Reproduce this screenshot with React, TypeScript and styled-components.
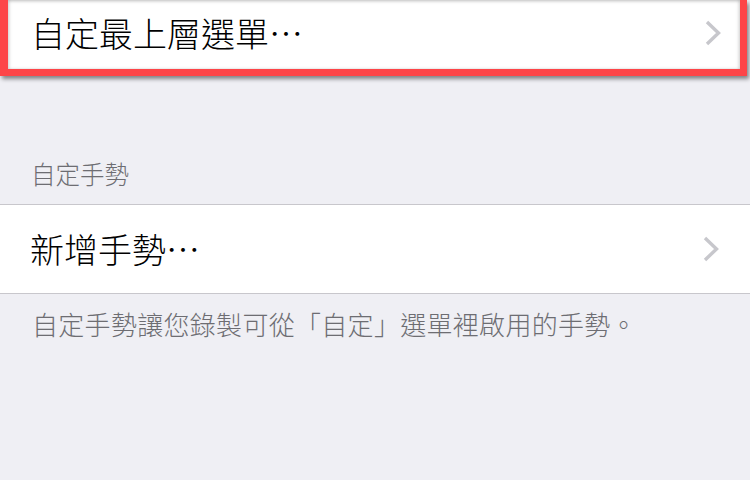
import React from "react";
import styled, { createGlobalStyle } from "styled-components";

const Global = createGlobalStyle`
  html, body {
    margin: 0;
    padding: 0;
    background: #efeff4;
  }
  body {
    font-family: "Noto Sans CJK TC", "Noto Sans", sans-serif;
    overflow: hidden;
  }
`;

const Page = styled.div`
  width: 750px;
  height: 480px;
  background: #efeff4;
  display: flex;
  flex-direction: column;
`;

const HighlightRow = styled.div`
  box-sizing: border-box;
  width: 747px;
  height: 76px;
  background: #fff;
  border: 7px solid #fd4548;
  border-left-width: 8px;
  border-top: 0;
  box-shadow: 2px 3px 4px rgba(0, 0, 0, 0.45), inset 0 2px 3px rgba(0, 0, 0, 0.12),
    inset 2px 0 3px rgba(0, 0, 0, 0.1), inset -2px 0 3px rgba(0, 0, 0, 0.1);
  display: flex;
  align-items: center;
  justify-content: space-between;
  padding: 0 19px 3px 23px;
`;

const Group = styled.div`
  background: #fff;
  border-top: 1px solid #c8c7cc;
  border-bottom: 1px solid #c8c7cc;
`;

const Row = styled.div`
  box-sizing: border-box;
  height: 88px;
  display: flex;
  align-items: center;
  justify-content: space-between;
  padding: 0 31px 0 30px;
`;

const Label = styled.span`
  font-size: 34px;
  font-weight: 300;
  color: #000;
  line-height: 40px;
`;

const SectionHeader = styled.div`
  box-sizing: border-box;
  height: 128px;
  display: flex;
  align-items: flex-end;
  padding: 0 0 15px 31px;
  font-size: 24.5px;
  font-weight: 300;
  line-height: 30px;
  color: #6d6d72;
`;

const Footer = styled.div`
  padding: 14px 0 0 32px;
  font-size: 26px;
  font-weight: 300;
  line-height: 32px;
  color: #6d6d72;
  letter-spacing: 0.3px;
`;

const ChevronSvg = styled.svg`
  width: 16px;
  height: 26px;
  flex: none;
  display: block;
`;

const Chevron = () => (
  <ChevronSvg viewBox="0 0 16 26">
    <polyline
      points="2,2 13.5,13 2,24"
      fill="none"
      stroke="#c7c7cc"
      strokeWidth="3.4"
    />
  </ChevronSvg>
);

export default function App() {
  return (
    <Page lang="zh-Hant">
      <Global />
      <HighlightRow>
        <Label>自定最上層選單…</Label>
        <Chevron />
      </HighlightRow>
      <SectionHeader>自定手勢</SectionHeader>
      <Group>
        <Row>
          <Label>新增手勢…</Label>
          <Chevron />
        </Row>
      </Group>
      <Footer>自定手勢讓您錄製可從「自定」選單裡啟用的手勢。</Footer>
    </Page>
  );
}
